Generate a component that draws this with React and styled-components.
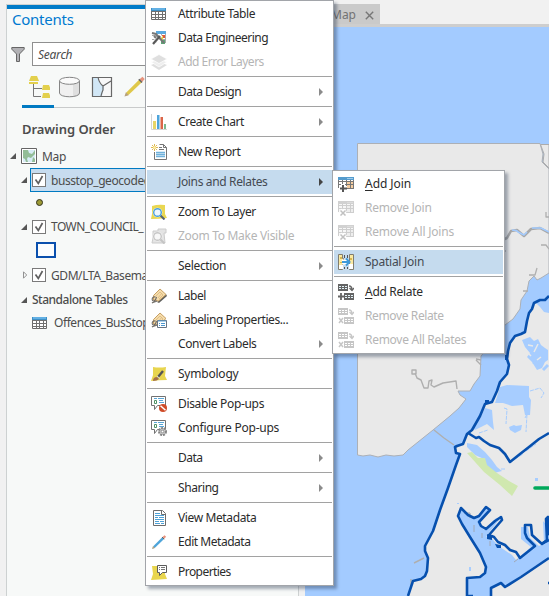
import React from "react";
import styled, { createGlobalStyle } from "styled-components";

const Global = createGlobalStyle`
  html, body { margin: 0; padding: 0; overflow: hidden; }
  body { font-family: "Noto Sans", "Open Sans", sans-serif; font-size: 12px; color: #4c4c4c; }
  svg { display: block; flex: none; }
`;

const Desktop = styled.div`
  position: relative;
  display: flex;
  width: 549px;
  height: 596px;
  overflow: hidden;
  background: #f1f1f1;
`;

/* ---------- contents pane ---------- */
const Pane = styled.section`
  box-sizing: border-box;
  width: 293px;
  margin: 4px 6px 0 6px;
  border: 1px solid #cdd1d1;
  border-bottom: 0;
  background: #f7f9f8;
`;
const PaneTitle = styled.h1`
  margin: 0;
  border-top: 4px solid #007ac8;
  padding-left: 5px;
  height: 22px;
  line-height: 21px;
  font-size: 15px;
  font-weight: 400;
  letter-spacing: -0.25px;
  color: #0079d0;
`;
const SearchRow = styled.div`
  display: flex;
  align-items: center;
  gap: 7px;
  margin: 11px 0 0 4px;
`;
const SearchBox = styled.div`
  box-sizing: border-box;
  flex: 1;
  height: 24px;
  border: 1px solid #8f8f8f;
  background: #fff;
  padding-left: 5px;
  line-height: 23px;
  font-style: italic;
  letter-spacing: -0.25px;
`;
const ViewTabs = styled.div`
  display: flex;
  margin: 4px 0 0 15px;
  border-bottom: 1px solid #c9cbcb;
  height: 37px;
`;
const ViewTab = styled.div`
  box-sizing: border-box;
  display: flex;
  justify-content: center;
  padding-top: 5px;
  width: 32px;
  height: 38px;
  border-bottom: 3px solid ${(p) => (p.$active ? "#007ac2" : "transparent")};
`;
const Heading = styled.h2`
  margin: 13px 0 0 15px;
  height: 23px;
  line-height: 16px;
  font-size: 13px;
  font-weight: 600;
  letter-spacing: -0.05px;
`;
const TreeRow = styled.div`
  display: flex;
  align-items: center;
  height: ${(p) => p.$h || 24}px;
  padding-left: ${(p) => p.$indent}px;
  white-space: nowrap;
`;
const TreeLabel = styled.span`
  display: flex;
  align-items: center;
  box-sizing: border-box;
  height: 24px;
  flex: 1;
  margin-left: 3px;
  padding-left: 1px;
  gap: ${(p) => p.$gap || 5}px;
  border: 1px solid ${(p) => (p.$selected ? "#007ac2" : "transparent")};
  background: ${(p) => (p.$selected ? "#c7dcef" : "transparent")};
  letter-spacing: ${(p) => p.$ls || 0}px;
  font-weight: ${(p) => (p.$strong ? 500 : 400)};
`;
const CheckFrame = styled.span`
  box-sizing: border-box;
  width: 14px;
  height: 14px;
  border: 1px solid #7a7a7a;
  background: #fff;
`;
const PointSymbol = styled.span`
  box-sizing: border-box;
  width: 7px;
  height: 7px;
  border-radius: 50%;
  border: 1.5px solid #33331c;
  background: #9c9a35;
`;
const AreaSymbol = styled.span`
  box-sizing: border-box;
  width: 20px;
  height: 16px;
  border: 2px solid #0a50ae;
  background: #fbfdff;
`;

/* ---------- map view ---------- */
const MapView = styled.section`
  flex: 1;
  display: flex;
  flex-direction: column;
`;
const TabStrip = styled.div`
  box-sizing: border-box;
  height: 27px;
  padding-top: 4px;
  border-bottom: 3px solid #cecece;
`;
const MapTab = styled.div`
  box-sizing: border-box;
  display: flex;
  align-items: center;
  justify-content: flex-end;
  gap: 9px;
  width: 75px;
  height: 20px;
  padding: 2px 6px 0 0;
  background: #cacaca;
  color: #737373;
  line-height: 16px;
`;

/* ---------- menus ---------- */
const Menu = styled.div`
  position: absolute;
  box-sizing: border-box;
  left: ${(p) => p.$x}px;
  top: ${(p) => p.$y}px;
  width: ${(p) => p.$w}px;
  border: 1px solid #a2a5aa;
  padding: 1px;
  background: #fff;
  box-shadow: 3px 3px 3px rgba(30, 45, 70, 0.38);
`;
const Item = styled.div`
  display: flex;
  align-items: center;
  height: 24px;
  padding-left: 4px;
  padding-right: 8px;
  background: ${(p) => (p.$on ? "#c5dbee" : "transparent")};
  color: ${(p) => (p.$off ? "#b5b5b5" : p.$on ? "#444a52" : "#2b2b2b")};
`;
const IconSlot = styled.span`
  width: 16px;
  height: 16px;
  margin-right: 11px;
`;
const ItemText = styled.span`
  flex: 1;
  white-space: nowrap;
  line-height: 16px;
  letter-spacing: ${(p) => p.$ls || 0}px;
  u { text-underline-offset: 2px; }
`;
const Separator = styled.div`
  height: 1px;
  margin: 2px 0 3px;
  background: #a2a2a2;
`;

const Svg = ({ children, w = 16, h = 16 }) => (
  <svg width={w} height={h} viewBox={`0 0 ${w} ${h}`} fill="none">{children}</svg>
);

const TableIcon = () => (
  <Svg>
    <path d="M.5 2.5h14v11H.5z" fill="#fff" stroke="#686868" />
    <path d="M0 2h15v3H0z" fill="#3f8fc4" /><path d="M1 2h13v2H1z" fill="#62b0e4" />
    <path d="M0 5.5h15M0 8.5h15M0 11.5h15M4.5 5v9M7.5 5v9M11.5 5v9" stroke="#707070" />
  </Svg>
);
const EngineeringIcon = () => (
  <Svg>
    <path d="M5 1h10v3H5z" fill="#5aaae0" />
    <path d="M1 5.5h14M1 9.5h14M5.5 4v9M10.5 4v9M14.5 4v9" stroke="#a9a9a9" />
    <path d="M6 5h4v4H6z" fill="#e08743" /><path d="M11 5h3v3h-3z" fill="#df5b3d" /><path d="M9 6h3v4H9z" fill="#e5cf43" /><path d="M10 10h4v4h-4z" fill="#5da777" />
    <path d="M2 14 10 5" stroke="#fff" strokeWidth="4" />
    <path d="M1 3l4 1 8 9M5 8l-2-2" stroke="#777" strokeWidth="2" />
    <path d="M2 14l7-8" stroke="#595959" strokeWidth="2.2" />
  </Svg>
);
const LayersIcon = () => (
  <Svg>
    <path d="M0 11l8-3 8 3-8 5z" fill="#dedede" /><path d="M0 8l8-3 8 3-8 5z" fill="#eee" stroke="#fff" strokeWidth=".7" /><path d="M0 5l8-4.5L16 5l-8 4.5z" fill="#dfdfdf" stroke="#fff" strokeWidth=".7" />
  </Svg>
);
const ChartIcon = () => (
  <Svg>
    <path d="M.5 0v15.5H16" stroke="#d4d4d4" /><path d="M2 7h3v8H2z" fill="#e7d568" /><path d="M6 1h2.5v14H6z" fill="#4ea5dc" /><path d="M9.5 3H12v12H9.5z" fill="#db6548" /><path d="M13 10h2v5h-2z" fill="#7bb88d" />
  </Svg>
);
const ReportIcon = () => (
  <Svg>
    <path d="M3.5 8v7.5h12v-12l-3-3h-4" fill="#fff" /><path d="M3.5 8v7.5h12v-12l-3-3h-4M12.5 .5v3h3" stroke="#757575" />
    <path d="M5 8.5h9M5 10.5h9M5 12.5h9" stroke="#70b2dc" strokeWidth="1.3" /><path d="M8 3.5h3M8 5.5h5" stroke="#777" />
    <path d="M3.5 0v7M0 3.5h7M1 1l5 5M6 1 1 6" stroke="#dfb956" /><circle cx="3.5" cy="3.5" r="1.5" fill="#fff0a5" />
  </Svg>
);
const ZoomIcon = ({ off }) => (
  <Svg>
    {off ? <path d="M2 3h5V1h8v4h-2l1 10H1l1-5z" fill="#e4e4e4" stroke="#ccc" /> : <path d="M1 2q6-2 13-1v9l2 4q-8 1-16 1l1-5z" fill="#e9d752" />}
    <circle cx="6.5" cy="8.5" r="4.8" fill="#fff" />
    <path d="m9.5 11.5 4 4" stroke={off ? "#c4c4c4" : "#526273"} strokeWidth="2" />
    <circle cx="6.5" cy="8.5" r="3.8" fill={off ? "#f8f8f8" : "#edf7ff"} stroke={off ? "#c6c6c6" : "#4a9fda"} strokeWidth="1.4" />
  </Svg>
);
const LabelIcon = ({ props }) => (
  <Svg>
    {!props && <path d="m6 14 9-8 1 2-8 7z" fill="#60605d" />}
    <path d="M2.5 7.5 9 1l6 5.500-7.500 6.500-5-1z" fill="#f5dcab" stroke="#c79f62" />
    <path d="m5 8 4-4 3 3-4 4M7 10l4-5" stroke="#dbb77d" strokeWidth=".8" />
    <path d="M4.500 9c-4-1-4 4-2 4s3-4 3-4M1 15c1-1 3-1 5-2" stroke="#706c66" strokeWidth="1.1" />
    {props && <><path d="M6.5 8.500h9v7h-9z" fill="#fff" stroke="#687482" /><path d="M7 9h8" stroke="#59a1d4" /><path d="M8 11.500h1M8 13.500h1M10 11.500h4M10 13.500h4" stroke="#4a96ce" /></>}
  </Svg>
);
const SymbologyIcon = () => (
  <Svg>
    <path d="M2 1q6 1 13 0l-1 9 2 4q-8 0-16 1l2-6z" fill="#e8d54e" /><path d="M12 5 7 11" stroke="#555" strokeWidth="2.4" /><path d="M2 15q0-4 4-4l2 2q-2 2-6 2" fill="#a57048" /><path d="m6 10 3 2.500" stroke="#ddd" />
  </Svg>
);
const PopupIcon = ({ gear }) => (
  <Svg>
    <path d="M.5 .5h14v9h-8l-3 4v-4h-3z" fill="#fff" stroke="#727272" /><path d="M3.500 4.500h2v3h-2z" stroke="#519267" /><path d="M3 2.500h3M7 2.500h6M8 4.500h4M8 6.500h5" stroke="#5aa6d6" />
    {gear ? <><circle cx="11.5" cy="11.5" r="3.5" fill="#c9c9c9" stroke="#858585" strokeWidth="2" strokeDasharray="2 .9" /><circle cx="11.5" cy="11.5" r="1.3" fill="#fff" stroke="#777" strokeWidth=".7" /></> : <><circle cx="12" cy="12" r="4" fill="#cf4b28" /><path d="m9.500 9.800 5 4.400" stroke="#fff" strokeWidth="1.500" /></>}
  </Svg>
);
const MetadataIcon = () => (
  <Svg>
    <path d="M2.5.5h9l3 3v12h-12z" fill="#fff" stroke="#6c6c6c" /><path d="M10.5.5v4h4" stroke="#6c6c6c" /><path d="M4 3.5h5M4 5.5h9M4 7.5h3M8 7.5h5M4 9.5h9M4 11.5h4M9 11.5h4M4 13.5h5M10 13.5h3" stroke="#4ea1d6" />
  </Svg>
);
const PencilIcon = ({ color = "#4fa5da", s = 16 }) => (
  <svg width={s} height={s} viewBox="0 0 16 16"><path d="M1.500 14.500l1-2.500 9-9 1.800 1.800L4 13.700z" fill={color} /><path d="m11.500 3 2-1.800 1.600 1.600-1.800 2z" fill="#e8937d" /><path d="m11 3 2.200 2.200" stroke="#666" /><path d="m1 15 1-3 2 2z" fill="#b6a17e" /></svg>
);
const PropertiesIcon = () => (
  <Svg><path d="M1 2h13v8l2 5-16 1 2-6z" fill="#e8d54e" /><path d="M6.5 1.5h9v7h-4l-3 3v-3h-2z" fill="#fff" stroke="#5c5c5c" /><path d="M8 3.5h1M10 3.5h4M8 5.5h1M10 5.5h4" stroke="#777" /></Svg>
);
const JoinIcon = ({ off }) => (
  <Svg>
    <path d="M.5 1.500h15v11H.5z" fill={off ? "#f7f7f7" : "#fff"} /><path d="M8 5h8v7H8z" fill={off ? "#eee" : "#f5cda0"} />
    <path d="M.5 4v8M4.5 4v8M8.5 4v9M12.5 4v9M15.5 2v11M0 5.500h16M0 8.500h16M8 12.500h8" stroke={off ? "#cecece" : "#777"} />
    <path d="M0 1h16v3H0z" fill={off ? "#d1d1d1" : "#549bcd"} /><path d="M9 2h6v1H9z" fill={off ? "#ddd" : "#a0cceb"} />
    {off ? <path d="m2.500 10 5 5m0-5-5 5" stroke="#fff" strokeWidth="4" /> : <path d="M5 8v8M1 12h8" stroke="#fff" strokeWidth="4" />}
    {off ? <path d="m2.500 10.500 5 5m0-5-5 5" stroke="#c1c1c1" strokeWidth="1.500" /> : <path d="M5 9v7M2 12.500h7" stroke="#555" strokeWidth="2" />}
  </Svg>
);
const SpatialIcon = () => (
  <Svg><path d="M.5.5h4v4h1v5h-1v6h-4zM11.5.5h4v15h-4z" fill="#fae9a1" stroke="#807d70" /><path d="M1 11h4v4H1zM11 10h4v5h-4z" fill="#fff" /><path d="M2 3h2v2H2zM12 4h2v2h-2zM2 8h2v1H2z" fill="#d7b653" /><path d="M4 8h7" stroke="#fff" strokeWidth="5" /><path d="M4 8h7M8 4.500 11.500 8 8 11.500" stroke="#3f9ada" strokeWidth="2" /><path d="M6.5 1v3M9.5 1v3M6.5 13v2M9.5 13v2" stroke="#555" /></Svg>
);
const RelateIcon = ({ off }) => {
  const c = off ? "#c6c6c6" : "#646464";
  return (
    <Svg><path d="M0 0h10v7H0zM6 9h10v7H6z" fill={c} /><path d="M1 2h2v1H1zM4 2h2v1H4zM7 2h2v1H7zM1 4h2v1H1zM4 4h2v1H4zM7 4h2v1H7zM7 11h2v1H7zM10 11h2v1h-2zM13 11h2v1h-2zM7 13h2v1H7zM10 13h2v1h-2zM13 13h2v1h-2z" fill={off ? "#fff" : "#e4f4fa"} /><path d="M11 2q3 0 3 4M11.5 4 14 6.500 16 4" stroke={c} strokeWidth="1.300" />{off ? <path d="m1 10 4 5m0-5-4 5" stroke={c} strokeWidth="1.500" /> : <path d="M3 9v7M0 12.500h6" stroke={c} strokeWidth="1.800" />}</Svg>
  );
};
const Arrow = ({ on }) => <svg width="5" height="8" viewBox="0 0 5 8"><path d="M0 0v8l4-4z" fill={on ? "#444" : "#8b8b8b"} /></svg>;

const Expander = ({ closed }) => <Svg w={7} h={8}>{closed ? <path d="M3.500 .8v6.400L6.700 4z" stroke="#929292" /> : <path d="M7 1v6H1z" fill="#565656" />}</Svg>;
const Check = () => (
  <CheckFrame><Svg w={12} h={12}><path d="m2.500 5.500 2.800 4L9.500 2" stroke="#606060" strokeWidth="1.700" /></Svg></CheckFrame>
);
const FunnelIcon = () => <Svg w={14} h={17}><path d="M.8 1.500h12.400v1.700L8.500 8v7.500h-3V8L.8 3.200z" fill="#b2b2b5" stroke="#666" /></Svg>;
const DrawingOrderIcon = () => <Svg w={24} h={24}><path d="M7.500 9v12.500H15M8 13.500h8" stroke="#777" /><path d="M5 1h6l2 5H3zM3 7h9v2H3zM17 10h6l2 5h-9zM17 18h6l2 5h-9z" fill="#e3d04d" /></Svg>;
const SourceIcon = () => <Svg w={24} h={24}><path d="M1.500 6v12c0 5 20 5 20 0V6" fill="#f0f0f0" /><path d="M15 8v13.400c4 0 6.500-1 6.500-3V6z" fill="#dfdfdf" /><path d="M1.500 6v12c0 5 20 5 20 0V6" stroke="#858585" /><ellipse cx="11.500" cy="5.800" rx="10" ry="3.500" fill="#fafafa" stroke="#858585" /></Svg>;
const SelectionIcon = () => <Svg w={24} h={24}><path d="M2.500 2.500h19v19h-19z" fill="#f8f8f8" /><path d="M3 3h5q1 6 6 9l-2 9H3z" fill="#d1e7f6" /><path d="M2.500 2.500h19v19h-19zM8 2q1 6 5 9l8-5M13 11v4q-1 2-2 6" stroke="#686868" strokeWidth="1.200" /></Svg>;
const MapIcon = () => <Svg><path d="M.5.5h15v15H.5z" fill="#fff" stroke="#656565" /><path d="M2 2h12v12H2z" fill="#d8ecf7" /><path d="M2 2h5l1 3 3 1 3-4v4l-4 4-3-1-1 2 1 3H5l-1-3-2-1zM12 9l2 2v3h-3z" fill="#93bd97" /></Svg>;

const HARBOUR = "M461 508L458 516 462 524 470 537 480 553 486 567 485 573 480 577 468 577 467 596H491V588L501 583 505 587 520 577 549 559V528L543 521 544 543 539 546 530 538 528 527H521L521 539 531 547 516 560 512 555 500 547 494 541 490 536 486 537 491 530 499 520 496 518 484 530 478 523 489 511 485 507 477 516 473 518 468 515Z";
const COAST = "M549 296L545 300 540 300 534 303 532 309 529 313 527 321 525 332 521 334 515 336 510 343 508 351 507 359 509 365 507 374 500 382 497 391 492 402 485 404 480 416 472 430 467 434 463 444 457 446 455 447 456 453 460 454 456 465 448 488 440 510 433 531 425 546 425 551 428 558 427 571 425 576 421 579 413 581 408 596";
const NORTH = "M357.5 143.5H540L543 154 542 162 549 169V273L541 278 537 280 534 276 529 281 527 291 521 300 520 309 513 319 505 325 495 340 481 356 480 376 474 384 470 391H458L460 395 466 399 459 408 450 416 433 430 418 442 408 450 403 455 394 456 386 455 378 457 370 455 363 456 357.5 455Z";

const MapCanvas = () => (
  <svg width="244" height="569" viewBox="305 27 244 569" fill="none" strokeLinejoin="round">
    <path d="M305 27h244v569H305z" fill="#a3cbff" />
    <path d={NORTH} fill="#e9e9e9" stroke="#acb0b6" />
    <path d="M540.5 144.500H549V168l-6-6 1-8z" fill="#e9e9e9" stroke="#acacac" />
    <path d="M500 241l7-3 4-7 6-1 7 6 7-7 9-1 9 5" stroke="#a8a8a8" strokeWidth="2.500" />
    <path d="M512 230q5 0 6 2l6 3 3-3M532 228l9 0 8 4" stroke="#a3cbff" strokeWidth="1.500" />
    <path d="M500 251h6M541 245h5l3 4M546 212v5h3M529 275h6l2-7M523 291h5" stroke="#afafaf" strokeWidth="1.300" />
    <path d="M412 370h4v4h-4zM415 373l2 5 4 2 3 8h4l1-7 3-1-1 5 3 2 9-4 13-2 1 8M476 360l5 5M481 360l-5-1M434 430l10 8 10 7M414 563l10-5M411 579v8" stroke="#afafaf" strokeWidth="1.400" />
    <path d={`${COAST}H549Z`} fill="#e9e9e9" />
    <path d="M500 387l7-2 22 1v11l2 3-1 15h-5l-2-10-11 1-9-3h-8zM485 408l7 2 1 12 1 8-7-6-12 6-3-2 8-10zM509 427l5-2 2 1 6-1-1 5-6 3-5-3zM522 340l8-3 4 4 4-2 3 6 4 3 3 2v10l-3 2-3 6-5 2-5-8-5-5 3-4-5-6zM536 303l13-6v16l-5-1-4-5zM467 443l10 2 8 7 7 8 5 7 5 4-8 2-7-6-3-8-9-4-8-8zM535 478h3v3h-3zM469 567h2v4h-2zM457 503h2v1h-2z" fill="#a7cdff" />
    <path d="M525 418l2-4-1 18M504 408l3 1-1 15M479 433l9-3M501 469h5M515 459l8-5M526 451l10-7M530 391l10-3 4 5-3 5" stroke="#a7cdff" strokeDasharray="4 1" />
    <path d="M543 370l5-5M538 364l-5-2" stroke="#a7cdff" strokeWidth="3" />
    <path d="M525 350l6 6M538 344l-4 8M528 345l5 1M541 357l-4 3" stroke="#e9e9e9" strokeWidth="1.500" />
    <path d="M467 453l5-1 6 6h7l2 7 10 8 12 8 9 5-6 10-12-11-16-13z" fill="#d0e8af" />
    <path d={HARBOUR} fill="#a3cbff" />
    <path d="M498 596v-5l51-34v39z" fill="#e9e9e9" />
    <path d="M464 513h6v5M474 525v7M482 533v5M490 541v5M514 562l4-3" stroke="#a0a7b4" />
    <g stroke="#0750ae" strokeWidth="2.600">
      <path d={COAST} />
      <path d="M468 433l8 5 3-1 5 4 6 4 9 3 6 6 5 8 10-8 9-7 10-8 10-6" />
      <path d="M473 596h-6v-18l13-1 5-4 1-6-6-14-10-16-8-13-4-8 3-8 7 7 6 3 5-2 7-9 4 3-11 12 2 4 5 3 9-8 6-4 1 3-13 15 5 2 4 5 7 3 5 5 6 2 4 6 15-12-8-8-2-5v-8h6l1 10 10 9 5-4-1-21 2-2 1 17 3 3" />
      <path d="M491 596v-8l10-5 4 4 16-10 28-19M543 543l6-3M547 522l2 2M548 583h1" />
    </g>
    <path d="M505 355h3v5h-3zM485 400h4v3h-4zM487 534l5 3v3l-5-1zM495 544l6 1v3h-4z" fill="#0750ae" />
    <path d="M535 488h14" stroke="#00a95b" strokeWidth="3.600" strokeLinecap="round" />
  </svg>
);

const MENU = [
  { t: "Attribute Table", ls: -0.4, i: <TableIcon /> },
  { t: "Data Engineering", ls: -0.5, i: <EngineeringIcon /> },
  { t: "Add Error Layers", ls: -0.5, i: <LayersIcon />, off: true },
  null, { t: "Data Design", ls: -0.52, sub: true },
  null, { t: "Create Chart", ls: -0.42, i: <ChartIcon />, sub: true },
  null, { t: "New Report", ls: -0.4, i: <ReportIcon /> },
  null, { t: "Joins and Relates", ls: -0.35, sub: true, on: true },
  null, { t: "Zoom To Layer", ls: -0.38, i: <ZoomIcon /> }, { t: "Zoom To Make Visible", ls: -0.3, i: <ZoomIcon off />, off: true },
  null, { t: "Selection", ls: -0.33, sub: true },
  null, { t: "Label", ls: -0.5, i: <LabelIcon /> }, { t: "Labeling Properties...", ls: -0.41, i: <LabelIcon props /> }, { t: "Convert Labels", ls: -0.36, sub: true },
  null, { t: "Symbology", ls: -0.22, i: <SymbologyIcon /> },
  null, { t: "Disable Pop-ups", ls: -0.33, i: <PopupIcon /> }, { t: "Configure Pop-ups", ls: -0.24, i: <PopupIcon gear /> },
  null, { t: "Data", ls: -0.5, sub: true },
  null, { t: "Sharing", ls: -0.43, sub: true },
  null, { t: "View Metadata", ls: -0.38, i: <MetadataIcon /> }, { t: "Edit Metadata", ls: -0.46, i: <PencilIcon /> },
  null, { t: "Properties", ls: -0.55, i: <PropertiesIcon /> },
];
const SUBMENU = [
  { t: "Add Join", ls: -0.05, key: true, i: <JoinIcon /> },
  { t: "Remove Join", ls: -0.27, i: <JoinIcon off />, off: true },
  { t: "Remove All Joins", ls: -0.2, i: <JoinIcon off />, off: true },
  null, { t: "Spatial Join", ls: -0.25, i: <SpatialIcon />, on: true },
  null, { t: "Add Relate", ls: -0.3, key: true, i: <RelateIcon /> },
  { t: "Remove Relate", ls: -0.38, i: <RelateIcon off />, off: true },
  { t: "Remove All Relates", ls: -0.28, i: <RelateIcon off />, off: true },
];

const MenuItems = ({ items }) =>
  items.map((m, n) =>
    m ? (
      <Item key={n} $on={m.on} $off={m.off}>
        <IconSlot>{m.i}</IconSlot>
        <ItemText $ls={m.ls}>{m.key ? <><u>{m.t[0]}</u>{m.t.slice(1)}</> : m.t}</ItemText>
        {m.sub && <Arrow on={m.on} />}
      </Item>
    ) : <Separator key={n} />
  );

export default function App() {
  return (
    <Desktop>
      <Global />
      <Pane>
        <PaneTitle>Contents</PaneTitle>
        <SearchRow><FunnelIcon /><SearchBox>Search</SearchBox></SearchRow>
        <ViewTabs>
          <ViewTab $active><DrawingOrderIcon /></ViewTab>
          <ViewTab><SourceIcon /></ViewTab>
          <ViewTab><SelectionIcon /></ViewTab>
          <ViewTab><PencilIcon color="#dfc84a" s={23} /></ViewTab>
        </ViewTabs>
        <Heading>Drawing Order</Heading>
        <TreeRow $indent={2}><Expander /><TreeLabel $ls={-0.3}><MapIcon />Map</TreeLabel></TreeRow>
        <TreeRow $indent={13}><Expander /><TreeLabel $selected $ls={-0.43}><Check />busstop_geocoded</TreeLabel></TreeRow>
        <TreeRow $indent={29} $h={21}><PointSymbol /></TreeRow>
        <TreeRow $indent={13} $h={27}><Expander /><TreeLabel $ls={-0.55}><Check />TOWN_COUNCIL_</TreeLabel></TreeRow>
        <TreeRow $indent={29} $h={20}><AreaSymbol /></TreeRow>
        <TreeRow $indent={13} $h={30}><Expander closed /><TreeLabel $ls={-0.42}><Check />GDM/LTA_Basemap</TreeLabel></TreeRow>
        <TreeRow $indent={13} $h={19}><Expander /><TreeLabel $strong $ls={-0.5}>Standalone Tables</TreeLabel></TreeRow>
        <TreeRow $indent={20} $h={27}><TreeLabel $gap={6} $ls={-0.42}><TableIcon />Offences_BusStop</TreeLabel></TreeRow>
      </Pane>
      <MapView>
        <TabStrip>
          <MapTab>Map<Svg w={9} h={9}><path d="m.8.8 7.400 7.400m0-7.400L.8 8.200" stroke="#777" strokeWidth="1.400" /></Svg></MapTab>
        </TabStrip>
        <MapCanvas />
      </MapView>
      <Menu $x={145} $y={0} $w={189}><MenuItems items={MENU} /></Menu>
      <Menu $x={332} $y={170} $w={173}><MenuItems items={SUBMENU} /></Menu>
    </Desktop>
  );
}
